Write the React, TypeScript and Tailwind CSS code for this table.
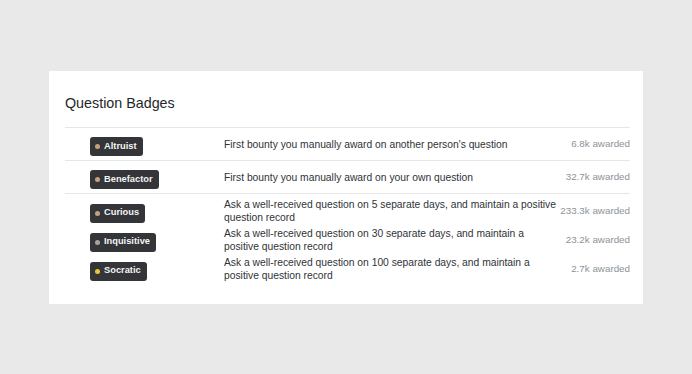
const BRONZE = "bg-[#c9a07c]";
const SILVER = "bg-[#a4a4a4]";
const GOLD = "bg-[#f2c230]";

type Badge = { name: string; dot: string; desc: string; awarded: string };

const singles: Badge[] = [
  { name: "Altruist", dot: BRONZE, desc: "First bounty you manually award on another person's question", awarded: "6.8k awarded" },
  { name: "Benefactor", dot: BRONZE, desc: "First bounty you manually award on your own question", awarded: "32.7k awarded" },
];

const series: Badge[] = [
  { name: "Curious", dot: BRONZE, desc: "Ask a well-received question on 5 separate days, and maintain a positive question record", awarded: "233.3k awarded" },
  { name: "Inquisitive", dot: SILVER, desc: "Ask a well-received question on 30 separate days, and maintain a positive question record", awarded: "23.2k awarded" },
  { name: "Socratic", dot: GOLD, desc: "Ask a well-received question on 100 separate days, and maintain a positive question record", awarded: "2.7k awarded" },
];

function BadgeChip({ name, dot }: { name: string; dot: string }) {
  return (
    <span className="inline-flex h-[19px] items-center gap-[4px] rounded-[3px] bg-[#333538] pl-[5px] pr-[6px] text-[9.3px] font-bold text-[#f4f4f4]">
      <span className={`h-[5px] w-[5px] rounded-full ${dot}`} />
      {name}
    </span>
  );
}

function Row({ b, h }: { b: Badge; h: string }) {
  return (
    <div className={`flex items-center ${h}`}>
      <div className="w-[159px] shrink-0 pl-[25px]">
        <BadgeChip name={b.name} dot={b.dot} />
      </div>
      <div className="w-[336px] shrink-0 text-[10.3px] leading-[13px] text-[#2f3337]">{b.desc}</div>
      <div className="flex-1 whitespace-nowrap pt-[1px] text-right text-[9.8px] text-[#8c9299]">{b.awarded}</div>
    </div>
  );
}

export default function App() {
  return (
    <div className="flex h-[374px] w-[692px] items-start bg-[#e9e9e9] pl-[49px] pt-[71px] font-['Liberation_Sans',Arial,sans-serif]">
      <div className="h-[233px] w-[594px] bg-white pl-[16px] pr-[13px] pt-[23px]">
        <h2 className="text-[14.3px] leading-[18px] text-[#242729]">Question Badges</h2>
        <div className="mt-[15px]">
          {singles.map((b) => (
            <div key={b.name} className="border-t border-[#e4e6e8]">
              <Row b={b} h="h-[32px]" />
            </div>
          ))}
          <div className="border-t border-[#e4e6e8] pt-[2px]">
            {series.map((b) => (
              <Row key={b.name} b={b} h="h-[29px]" />
            ))}
          </div>
        </div>
      </div>
    </div>
  );
}
